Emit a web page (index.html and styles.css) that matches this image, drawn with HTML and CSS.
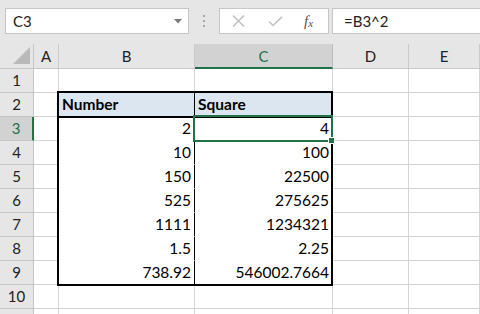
FILE: index.html
```html
<!DOCTYPE html>
<html>
<head>
<meta charset="utf-8">
<link rel="stylesheet" href="styles.css">
</head>
<body>
<div class="app">
  <div class="formula-bar">
    <div class="namebox">
      <span class="name">C3</span>
      <svg class="dd" width="8" height="5" viewBox="0 0 8 5"><path d="M0 0H8L4 4.5Z" fill="#7a7a7a"/></svg>
    </div>
    <div class="grip"><i></i><i></i><i></i></div>
    <div class="fbuttons">
      <svg class="btn" width="13" height="12" viewBox="0 0 13 12"><path d="M1 0.5L12 11.5M12 0.5L1 11.5" stroke="#c3c3c3" stroke-width="1.6" fill="none"/></svg>
      <svg class="btn" width="15" height="11" viewBox="0 0 15 11"><path d="M1 5.5L5 9.5L14 0.8" stroke="#c3c3c3" stroke-width="1.6" fill="none"/></svg>
      <span class="fx">f<sub>x</sub></span>
    </div>
    <div class="finput">=B3^2</div>
  </div>
  <div class="sheet">
    <div class="grid">
      <div class="corner"><svg width="17" height="17" viewBox="0 0 17 17"><path d="M0 17H17V0Z" fill="#b9b9b9"/></svg></div>
      <div class="ch">A</div>
      <div class="ch">B</div>
      <div class="ch sel">C</div>
      <div class="ch">D</div>
      <div class="ch">E</div>

      <div class="rh">1</div><div class="c"></div><div class="c"></div><div class="c"></div><div class="c"></div><div class="c"></div>
      <div class="rh">2</div><div class="c"></div><div class="c th tb">Number</div><div class="c th">Square</div><div class="c"></div><div class="c"></div>
      <div class="rh sel">3</div><div class="c"></div><div class="c n tb top">2</div><div class="c n in top">4</div><div class="c"></div><div class="c"></div>
      <div class="rh">4</div><div class="c"></div><div class="c n tb">10</div><div class="c n in">100</div><div class="c"></div><div class="c"></div>
      <div class="rh">5</div><div class="c"></div><div class="c n tb">150</div><div class="c n in">22500</div><div class="c"></div><div class="c"></div>
      <div class="rh">6</div><div class="c"></div><div class="c n tb">525</div><div class="c n in">275625</div><div class="c"></div><div class="c"></div>
      <div class="rh">7</div><div class="c"></div><div class="c n tb">1111</div><div class="c n in">1234321</div><div class="c"></div><div class="c"></div>
      <div class="rh">8</div><div class="c"></div><div class="c n tb">1.5</div><div class="c n in">2.25</div><div class="c"></div><div class="c"></div>
      <div class="rh">9</div><div class="c"></div><div class="c n tb">738.92</div><div class="c n in">546002.7664</div><div class="c"></div><div class="c"></div>
      <div class="rh">10</div><div class="c"></div><div class="c"></div><div class="c"></div><div class="c"></div><div class="c"></div>
      <div class="rh"></div><div class="c"></div><div class="c"></div><div class="c"></div><div class="c"></div><div class="c"></div>
    </div>
    <div class="table-outline"></div>
    <div class="selection"></div>
    <div class="handle"></div>
  </div>
</div>
</body>
</html>
```

FILE: styles.css
```css
html, body {
  margin: 0;
  padding: 0;
  width: 480px;
  height: 314px;
  overflow: hidden;
  background: #e6e6e6;
  font-family: Lato, "Liberation Sans", sans-serif;
  color: #000;
}

.app {
  display: flex;
  flex-direction: column;
  width: 480px;
  height: 314px;
}

.formula-bar {
  height: 44px;
  box-sizing: border-box;
  padding-top: 8px;
  display: flex;
  align-items: flex-start;
}

.namebox {
  margin-left: 5px;
  width: 184px;
  height: 26px;
  box-sizing: border-box;
  background: #fff;
  border: 1px solid #c6c6c6;
  display: flex;
  align-items: center;
  justify-content: space-between;
  padding: 0 6px 0 7px;
}

.name {
  font-size: 15px;
  color: #222;
}

.dd {
  margin-top: 1px;
}

.grip {
  width: 30px;
  height: 26px;
  display: flex;
  flex-direction: column;
  align-items: center;
  justify-content: center;
  gap: 3px;
}

.grip i {
  display: block;
  width: 2px;
  height: 2px;
  background: #a8a8a8;
}

.fbuttons {
  width: 110px;
  height: 26px;
  box-sizing: border-box;
  background: #fff;
  border: 1px solid #c6c6c6;
  display: flex;
  align-items: center;
  padding-left: 12px;
}

.fbuttons .btn:nth-child(1) {
  margin-right: 23px;
}

.fbuttons .btn:nth-child(2) {
  margin-right: 21px;
}

.fx {
  font-family: "Liberation Serif", serif;
  font-style: italic;
  font-size: 15px;
  color: #555;
  line-height: 1;
}

.fx sub {
  font-size: 11px;
  vertical-align: -1px;
}

.finput {
  margin-left: 3px;
  flex: 1;
  height: 26px;
  box-sizing: border-box;
  background: #fff;
  border: 1px solid #c6c6c6;
  border-right: none;
  font-size: 15px;
  line-height: 24px;
  padding-left: 11px;
  color: #222;
}

.sheet {
  position: relative;
  flex: 1;
  background: #fff;
  overflow: hidden;
}

.grid {
  display: grid;
  grid-template-columns: 34px 25px 136px 138px 76px 1fr;
  grid-template-rows: 25px;
  grid-auto-rows: 24px;
}

.grid > div {
  box-sizing: border-box;
}

.corner {
  background: #e6e6e6;
  border-right: 1px solid #c6c6c6;
  border-bottom: 1px solid #c6c6c6;
  display: flex;
  align-items: flex-end;
  justify-content: flex-end;
  padding: 0 3px 4px 0;
}

.corner svg {
  display: block;
}

.ch {
  background: #e6e6e6;
  border-right: 1px solid #cbcbcb;
  border-bottom: 1px solid #c6c6c6;
  text-align: center;
  font-size: 15px;
  line-height: 24px;
  color: #222;
}

.ch.sel {
  background: #d2d2d2;
  color: #217346;
  border-bottom: 2px solid #217346;
  border-right-color: #bcbcbc;
}

.rh {
  background: #e6e6e6;
  border-right: 1px solid #c6c6c6;
  border-bottom: 1px solid #c6c6c6;
  text-align: center;
  font-size: 15px;
  line-height: 23px;
  color: #222;
}

.rh.sel {
  background: #d2d2d2;
  color: #217346;
  border-right: 2px solid #217346;
}

.c {
  border-right: 1px solid #d4d4d4;
  border-bottom: 1px solid #d4d4d4;
  font-size: 15.5px;
  line-height: 23px;
  padding: 0 3px;
  white-space: nowrap;
  overflow: hidden;
}

.th {
  background: #dce6f1;
  font-weight: bold;
  border-bottom-color: #000;
}

.tb {
  border-right-color: #000;
}

.n {
  text-align: right;
  border-bottom-color: #fff;
}

.top {
  box-shadow: inset 0 1px 0 #000;
}

.table-outline {
  position: absolute;
  left: 57px;
  top: 47px;
  width: 276px;
  height: 195px;
  box-sizing: border-box;
  border: 2px solid #000;
  pointer-events: none;
}

.selection {
  position: absolute;
  left: 193px;
  top: 71px;
  width: 140px;
  height: 27px;
  box-sizing: border-box;
  border: 2px solid #217346;
  pointer-events: none;
}

.handle {
  position: absolute;
  left: 328px;
  top: 93px;
  width: 5px;
  height: 5px;
  background: #217346;
  border: 1px solid #fff;
}
```
